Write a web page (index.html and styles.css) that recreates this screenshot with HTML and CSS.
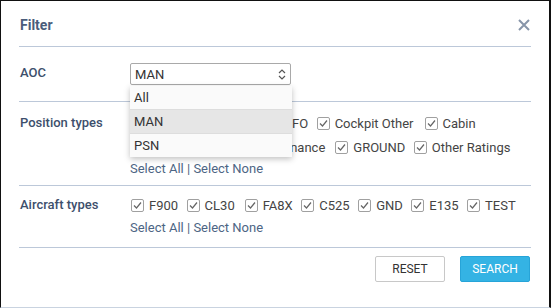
FILE: index.html
```html
<!DOCTYPE html>
<html lang="en">
<head>
    <meta charset="UTF-8">
    <title>Filter</title>
    <link rel="stylesheet" href="styles.css">
</head>
<body>
    <div class="modal">
        <div class="modal-header">
            <h1>Filter</h1>
            <svg class="close" width="12" height="12" viewBox="0 0 12 12"><path d="M1 1 L11 11 M11 1 L1 11" stroke="#8795a9" stroke-width="2"/></svg>
        </div>

        <div class="row row-aoc">
            <div class="label">AOC</div>
            <div class="field">
                <div class="select-wrap">
                    <div class="select">
                        <span>MAN</span>
                        <svg width="8" height="11" viewBox="0 0 8 11"><path d="M1 4 L4 1 L7 4 M1 7 L4 10 L7 7" fill="none" stroke="#555" stroke-width="1.2"/></svg>
                    </div>
                    <ul class="dropdown">
                        <li>All</li>
                        <li class="active">MAN</li>
                        <li>PSN</li>
                    </ul>
                </div>
            </div>
        </div>

        <div class="row row-positions">
            <div class="label">Position types</div>
            <div class="field">
                <div class="checks">
                    <label class="check"><span class="box"></span>Captain</label>
                    <label class="check"><span class="box"></span>Cockpit</label>
                    <label class="check"><span class="box"></span>FO</label>
                    <label class="check wide"><span class="box"></span>Cockpit Other</label>
                    <label class="check"><span class="box"></span>Cabin</label>
                </div>
                <div class="checks">
                    <label class="check"><span class="box"></span>Cabin Others</label>
                    <label class="check"><span class="box"></span>Maintenance</label>
                    <label class="check"><span class="box"></span>GROUND</label>
                    <label class="check"><span class="box"></span>Other Ratings</label>
                </div>
                <div class="links"><a href="#">Select All</a> | <a href="#">Select None</a></div>
            </div>
        </div>

        <div class="row row-aircraft">
            <div class="label">Aircraft types</div>
            <div class="field">
                <div class="checks">
                    <label class="check"><span class="box"></span>F900</label>
                    <label class="check"><span class="box"></span>CL30</label>
                    <label class="check"><span class="box"></span>FA8X</label>
                    <label class="check"><span class="box"></span>C525</label>
                    <label class="check"><span class="box"></span>GND</label>
                    <label class="check"><span class="box"></span>E135</label>
                    <label class="check"><span class="box"></span>TEST</label>
                </div>
                <div class="links"><a href="#">Select All</a> | <a href="#">Select None</a></div>
            </div>
        </div>

        <div class="modal-footer">
            <button class="btn">Reset</button>
            <button class="btn btn-primary">Search</button>
        </div>
    </div>
</body>
</html>
```

FILE: styles.css
```css
body {
    margin: 0;
    font-family: Roboto, "Liberation Sans", sans-serif;
    font-size: 13px;
    color: #444;
    background: #fff;
}
.modal {
    height: 306px;
    border: 1px solid #111;
    border-right-width: 2px;
    border-bottom: 1px solid #c9d3e0;
    padding: 0 18px;
    overflow: hidden;
}
.modal-header {
    display: flex;
    justify-content: space-between;
    align-items: center;
    height: 42px;
    padding-top: 3px;
    border-bottom: 1px solid #bcc8d9;
}
.modal-header h1 {
    margin: 0 0 0 1px;
    font-size: 14px;
    font-weight: 700;
    color: #4a5d7b;
}
.close {
    margin-right: 1px;
}
.row {
    display: flex;
    border-bottom: 1px solid #bcc8d9;
}
.row-aoc {
    padding: 16px 0;
}
.row-positions {
    padding: 9px 0 6px;
}
.row-aircraft {
    padding: 7px 0 9px;
}
.label {
    width: 110px;
    padding-left: 1px;
    font-weight: 500;
    color: #3d4f6c;
    line-height: 24px;
}
.row-aoc .label {
    line-height: 20px;
}
.field {
    flex: 1;
}
.select-wrap {
    position: relative;
    width: 161px;
}
.select {
    display: flex;
    justify-content: space-between;
    align-items: center;
    height: 20px;
    padding: 0 4px 0 4px;
    border: 1px solid #a9a9a9;
    border-radius: 2px;
    color: #333;
}
.dropdown {
    position: absolute;
    top: 23px;
    left: 0;
    width: 162px;
    margin: 0;
    padding: 0;
    list-style: none;
    background: #fafafa;
    box-shadow: 0 2px 6px rgba(0, 0, 0, 0.25);
    z-index: 2;
}
.dropdown li {
    height: 23px;
    line-height: 23px;
    padding-left: 4px;
    color: #333;
    border-bottom: 1px solid #ddd;
}
.dropdown li:last-child {
    border-bottom: 0;
}
.dropdown li.active {
    background: #e6e6e6;
}
.checks {
    display: flex;
    height: 24px;
    align-items: center;
    white-space: nowrap;
}
.check {
    display: flex;
    align-items: center;
    margin-right: 7.5px;
    color: #444;
}
.check.wide {
    margin-right: 10px;
}
.checks .check:nth-child(2) {
    margin-right: 9px;
}
.box {
    width: 11px;
    height: 11px;
    margin: 0 5px 0 1px;
    border: 1px solid #a0a0a0;
    border-radius: 2px;
    background: #fff url("data:image/svg+xml;utf8,<svg xmlns='http://www.w3.org/2000/svg' width='11' height='11'><path d='M2 5.5 L4.5 8 L9 2.5' fill='none' stroke='%23666' stroke-width='1.2'/></svg>") no-repeat center;
}
.links {
    line-height: 21px;
    color: #4d6584;
}
.links a {
    color: #4d6584;
    text-decoration: none;
}
.row-positions .links {
    line-height: 20px;
}
.modal-footer {
    display: flex;
    justify-content: flex-end;
    gap: 15px;
    padding: 8px 1px 0 0;
}
.btn {
    width: 70px;
    height: 26px;
    font-family: Roboto, "Liberation Sans", sans-serif;
    font-size: 12px;
    text-transform: uppercase;
    color: #333;
    background: #fff;
    border: 1px solid #c8c8c8;
    border-radius: 2px;
}
.btn-primary {
    color: #fff;
    background: #34b3e4;
    border-color: #27a4d8;
}
```
